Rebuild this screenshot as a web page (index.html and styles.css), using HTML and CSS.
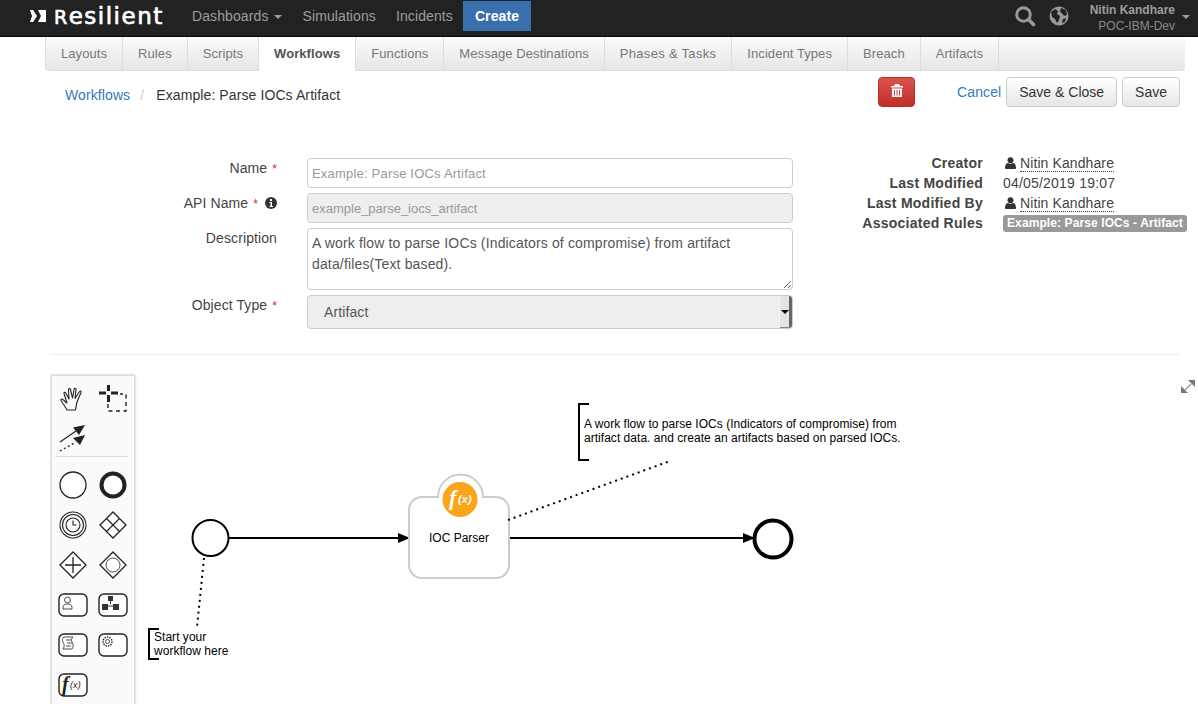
FILE: index.html
```html
<!DOCTYPE html>
<html lang="en">
  <head>
    <meta charset="UTF-8" />
    <title>Workflows</title>
    <link rel="stylesheet" href="styles.css">
  </head>
  <body>
    <header class="navbar">
      <div class="brand">
        <svg class="brandMark" width="16" height="14" viewBox="0 0 16 14"><path d="M0 1h3l4 6-4 6H0l2-6zM8 1h8v12H8l3-6z" fill="#fff"/></svg>
        <span class="brandName"><span class="brandInitial">R</span>esilient</span>
      </div>
      <a class="navLink">Dashboards <span class="caret"></span></a>
      <a class="navLink">Simulations</a>
      <a class="navLink">Incidents</a>
      <a class="navCreate">Create</a>
      <div class="navRight">
        <svg class="navIcon" width="22" height="22" viewBox="0 0 22 22"><circle cx="9.5" cy="9.5" r="6.8" fill="none" stroke="#999" stroke-width="3"/><path d="M14.5 14.5l5 5" stroke="#999" stroke-width="3.6" stroke-linecap="round"/></svg>
        <svg class="navIcon globe" width="20" height="20" viewBox="0 0 20 20"><circle cx="10" cy="10" r="9.5" fill="#999"/><path d="M2 6l4-3 3 2-1 3 3 2-1 4-2 3-2-4-3-2zM12 2l5 2 1 5-3 1-2-3-2-1zM14 13l3-1-1 4-3 1z" fill="#222"/></svg>
        <div class="user">
          <div class="userName">Nitin Kandhare</div>
          <div class="userOrg">POC-IBM-Dev</div>
        </div>
        <span class="caret userCaret"></span>
      </div>
    </header>

    <nav class="tabs">
      <a class="tab">Layouts</a>
      <a class="tab">Rules</a>
      <a class="tab">Scripts</a>
      <a class="tab active">Workflows</a>
      <a class="tab">Functions</a>
      <a class="tab">Message Destinations</a>
      <a class="tab wide">Phases &amp; Tasks</a>
      <a class="tab">Incident Types</a>
      <a class="tab">Breach</a>
      <a class="tab">Artifacts</a>
    </nav>

    <div class="toolbar">
      <div class="crumbs">
        <a class="link">Workflows</a>
        <span class="crumbSep">/</span>
        <span>Example: Parse IOCs Artifact</span>
      </div>
      <div class="actions">
        <button class="btn btnDanger">
          <svg width="12" height="13" viewBox="0 0 12 13"><path d="M4 0h4l1 2h3v1.500H0V2h3zM1 4.500h10V13H1zM3 6v5.500h1V6zM5.500 6v5.500h1V6zM8 6v5.500h1V6z" fill="#fff" fill-rule="evenodd"/></svg>
        </button>
        <a class="link cancel">Cancel</a>
        <button class="btn">Save &amp; Close</button>
        <button class="btn">Save</button>
      </div>
    </div>

    <section class="details">
      <form class="form">
        <label class="fieldLabel">Name <span class="req">*</span></label>
        <input class="field nameField" value="Example: Parse IOCs Artifact" />
        <label class="fieldLabel">API Name <span class="req">*</span>
          <svg class="info" width="12" height="12" viewBox="0 0 12 12"><circle cx="6" cy="6" r="6" fill="#333"/><path d="M5 2h2v2H5zM4.500 5H7v4h1v1H4.500V9h1V6h-1z" fill="#fff"/></svg>
        </label>
        <input class="field disabled" value="example_parse_iocs_artifact" disabled />
        <label class="fieldLabel">Description</label>
        <textarea class="field area">A work flow to parse IOCs (Indicators of compromise) from artifact data/files(Text based).</textarea>
        <label class="fieldLabel">Object Type <span class="req">*</span></label>
        <div class="selectBox">
          <span class="selectValue">Artifact</span>
          <span class="selectArrow"></span>
        </div>
      </form>
      <dl class="meta">
        <dt>Creator</dt>
        <dd>
          <svg class="person" width="11" height="12" viewBox="0 0 11 12"><circle cx="5.500" cy="3.200" r="3" fill="#333"/><path d="M0 11c0-3.500 1.500-5 3-5l2.500 1L8 6c1.500 0 3 1.500 3 5 0 .6-.5 1-1 1H1c-.5 0-1-.4-1-1z" fill="#333"/></svg>
          <span class="dotted">Nitin Kandhare</span>
        </dd>
        <dt>Last Modified</dt>
        <dd class="date">04/05/2019 19:07</dd>
        <dt>Last Modified By</dt>
        <dd>
          <svg class="person" width="11" height="12" viewBox="0 0 11 12"><circle cx="5.500" cy="3.200" r="3" fill="#333"/><path d="M0 11c0-3.500 1.500-5 3-5l2.500 1L8 6c1.500 0 3 1.500 3 5 0 .6-.5 1-1 1H1c-.5 0-1-.4-1-1z" fill="#333"/></svg>
          <span class="dotted">Nitin Kandhare</span>
        </dd>
        <dt>Associated Rules</dt>
        <dd><span class="badge">Example: Parse IOCs - Artifact</span></dd>
      </dl>
    </section>

    <hr class="divider" />

    <section class="canvas">
      <svg class="diagram" width="1198" height="349" viewBox="0 355 1198 349">
        <defs>
          <marker id="arrow" markerWidth="12" markerHeight="10" refX="11" refY="5" orient="auto" markerUnits="userSpaceOnUse"><path d="M0 0L12 5L0 10z" fill="#000"/></marker>
        </defs>
        <path d="M1195 380v7l-7-7zM1181 393v-7l7 7z" fill="#777"/>
        <path d="M1185 390l6-6" stroke="#999" stroke-width="1.400"/>

        <circle cx="210.500" cy="538" r="18" fill="#fff" stroke="#000" stroke-width="2"/>
        <path d="M229 538H409" stroke="#000" stroke-width="2" marker-end="url(#arrow)"/>
        <path d="M509 538H754" stroke="#000" stroke-width="2" marker-end="url(#arrow)"/>
        <circle cx="773" cy="539" r="18.500" fill="#fff" stroke="#000" stroke-width="4"/>

        <path d="M409 510a13 13 0 0 1 13-13h16a22.500 22.500 0 0 1 45 0h13a13 13 0 0 1 13 13v55a13 13 0 0 1-13 13H422a13 13 0 0 1-13-13z" fill="#fff" stroke="#ccc" stroke-width="2"/>
        <circle cx="460" cy="499.500" r="17.500" fill="#faa519"/>
        <text class="fxBig" x="449" y="505">f</text>
        <text class="fxSmall" x="458" y="503">(x)</text>
        <text class="nodeText" x="459" y="542" text-anchor="middle">IOC Parser</text>

        <path d="M204 558L197 627" stroke="#000" stroke-width="2" stroke-dasharray="2 4" fill="none"/>
        <path d="M159 629H149V659H159" stroke="#000" stroke-width="2" fill="none"/>
        <text class="noteText" x="154" y="641">Start your</text>
        <text class="noteText" x="154" y="655">workflow here</text>

        <path d="M508 520L670 461" stroke="#000" stroke-width="2" stroke-dasharray="2 4" fill="none"/>
        <path d="M589 404H579V460H589" stroke="#000" stroke-width="2" fill="none"/>
        <text class="noteText" x="584" y="428">A work flow to parse IOCs (Indicators of compromise) from</text>
        <text class="noteText" x="584" y="442">artifact data. and create an artifacts based on parsed IOCs.</text>
      </svg>

      <div class="palette">
        <div class="tool">
          <svg width="26" height="26" viewBox="0 0 26 26"><path d="M7 24C5 20 3 18 1 14.500c-.6-1 .8-2 1.800-1L7 17 4 7.500c-.3-1.200 1.400-1.700 1.800-.5L9 13 8.500 3.500c0-1.300 1.800-1.300 2 0L12.500 12l1.700-9c.2-1.200 2-1 1.800.3L15 12.500l4.500-7c.6-1 2-.4 1.600.7L17 16c-.5 2-1 5-1.500 8z" fill="none" stroke="#222" stroke-width="1.100" stroke-linejoin="round"/></svg>
        </div>
        <div class="tool">
          <svg width="30" height="28" viewBox="0 0 30 28"><path d="M1 8h7M13 8h7M10.500 0v6M10.500 10v7" stroke="#222" stroke-width="3"/><path d="M10 19v7h18V9h-6" fill="none" stroke="#222" stroke-width="1.400" stroke-dasharray="4 3.500"/></svg>
        </div>
        <div class="tool short">
          <svg width="28" height="28" viewBox="0 0 28 28"><path d="M1 18L17 7" stroke="#222" stroke-width="1.200"/><path d="M14 3.500L26 1 20 11z" fill="#222"/><path d="M1 27l16-9" stroke="#222" stroke-width="1.300" stroke-dasharray="2 2.500"/><path d="M14 14l12-3-5 10z" fill="#222"/></svg>
        </div>
        <div class="tool short"></div>
        <div class="paletteSep"></div>
        <div class="tool"><svg width="28" height="28" viewBox="0 0 28 28"><circle cx="14" cy="14" r="13" fill="#fff" stroke="#222" stroke-width="1.300"/></svg></div>
        <div class="tool"><svg width="28" height="28" viewBox="0 0 28 28"><circle cx="14" cy="14" r="11.500" fill="#fff" stroke="#222" stroke-width="4"/></svg></div>
        <div class="tool"><svg width="28" height="28" viewBox="0 0 28 28"><g fill="none" stroke="#222" stroke-width="1.100"><circle cx="14" cy="14" r="13"/><circle cx="14" cy="14" r="10.500"/><circle cx="14" cy="14" r="7"/><path d="M14 9.500V14h3.500"/></g></svg></div>
        <div class="tool"><svg width="28" height="28" viewBox="0 0 28 28"><path d="M14 1l13 13-13 13L1 14z" fill="#fff" stroke="#222" stroke-width="1.300"/><path d="M7.500 7.500l13 13M20.500 7.500l-13 13" stroke="#222" stroke-width="1.200"/></svg></div>
        <div class="tool"><svg width="28" height="28" viewBox="0 0 28 28"><path d="M14 1l13 13-13 13L1 14z" fill="#fff" stroke="#222" stroke-width="1.300"/><path d="M14 6v16M6 14h16" stroke="#222" stroke-width="1.300"/></svg></div>
        <div class="tool"><svg width="28" height="28" viewBox="0 0 28 28"><path d="M14 1l13 13-13 13L1 14z" fill="#fff" stroke="#222" stroke-width="1.300"/><circle cx="14" cy="14" r="7" fill="none" stroke="#222" stroke-width=".8"/></svg></div>
        <div class="tool"><svg width="30" height="24" viewBox="0 0 30 24"><rect x="1" y="1" width="28" height="22" rx="5" fill="#fff" stroke="#222" stroke-width="1.400"/><circle cx="9.500" cy="7" r="3" fill="none" stroke="#222" stroke-width=".8"/><path d="M5 14c0-2 2-3 4.500-3S14 12 14 14v2H5z" fill="none" stroke="#222" stroke-width=".8"/></svg></div>
        <div class="tool"><svg width="30" height="24" viewBox="0 0 30 24"><rect x="1" y="1" width="28" height="22" rx="5" fill="#fff" stroke="#222" stroke-width="1.400"/><path d="M10 3h5v5h-5zM4 11h6v6H4zM15 11h6v6h-6z" fill="#333"/><path d="M12.500 8v3M10 13h5" stroke="#333"/></svg></div>
        <div class="tool"><svg width="30" height="24" viewBox="0 0 30 24"><rect x="1" y="1" width="28" height="22" rx="5" fill="#fff" stroke="#222" stroke-width="1.400"/><path d="M6 4h9c-2 2-2 3-1 5s2 4 0 7H5c2-3 1-5 0-7s-1-3 1-5zM8 7h5M9 10h5M8 13h5" fill="none" stroke="#222" stroke-width=".8"/></svg></div>
        <div class="tool"><svg width="30" height="24" viewBox="0 0 30 24"><rect x="1" y="1" width="28" height="22" rx="5" fill="#fff" stroke="#222" stroke-width="1.400"/><circle cx="9.500" cy="8.500" r="4.500" fill="none" stroke="#222" stroke-width="1.400" stroke-dasharray="1.500 1"/><circle cx="9.500" cy="8.500" r="2" fill="none" stroke="#222" stroke-width=".8"/></svg></div>
        <div class="tool"><svg width="30" height="24" viewBox="0 0 30 24"><rect x="1" y="1" width="28" height="22" rx="5" fill="#fff" stroke="#222" stroke-width="1.400"/><text class="fxTool" x="4" y="18">f</text><text class="fxToolSmall" x="12" y="15">(x)</text></svg></div>
      </div>
    </section>
  </body>
</html>
```

FILE: styles.css
```css
html,
body {
  margin: 0;
  padding: 0;
  height: 704px;
  overflow: hidden;
  background: #fff;
  color: #333;
  font-family: "Liberation Sans", Arial, sans-serif;
  font-size: 14px;
  letter-spacing: 0.1px;
}

.navbar {
  display: flex;
  align-items: center;
  height: 37px;
  padding-bottom: 4px;
  box-sizing: border-box;
  background: #222;
  border-bottom: 1px solid #080808;
}

.brand {
  display: flex;
  align-items: center;
  width: 192px;
  padding-left: 30px;
  box-sizing: border-box;
}

.brandName {
  margin-left: 8px;
  color: #fff;
  font-family: "DejaVu Sans", sans-serif;
  font-size: 23px;
  letter-spacing: 1.5px;
  line-height: 28px;
  -webkit-text-stroke: 0.7px #fff;
}

.brandInitial {
  font-size: 19px;
}

.navLink {
  margin-right: 20px;
  color: #9d9d9d;
  white-space: nowrap;
}

.caret {
  display: inline-block;
  margin-left: 2px;
  vertical-align: middle;
  border-top: 4px solid #9d9d9d;
  border-left: 4px solid transparent;
  border-right: 4px solid transparent;
}

.navCreate {
  align-self: flex-start;
  margin: 1px 0 0 -10px;
  padding: 0 12px;
  height: 30px;
  line-height: 30px;
  background: #3a6fae;
  color: #fff;
  font-weight: bold;
}

.navRight {
  display: flex;
  align-items: center;
  margin-left: auto;
  padding: 4px 8px 0 0;
}

.navIcon {
  margin: -4px 13px 0 0;
}

.navIcon.globe {
  margin-right: 21px;
}

.user {
  text-align: right;
  font-size: 12px;
  line-height: 16px;
  color: #8a8a8a;
  letter-spacing: 0;
}

.userName {
  font-weight: bold;
  color: #9d9d9d;
}

.userCaret {
  margin: 0 0 2px 7px;
}

.tabs {
  display: flex;
  height: 34px;
  margin: 0 13px 0 45px;
  background: linear-gradient(#fbfbfb, #e6e6e6);
  border-bottom: 1px solid #ddd;
  border-left: 1px solid #ddd;
  border-radius: 0 0 4px 4px;
  box-sizing: border-box;
}

.tab {
  padding: 0 15px;
  border-right: 1px solid #ddd;
  color: #777;
  font-size: 13px;
  letter-spacing: 0.08px;
  line-height: 34px;
  white-space: nowrap;
}

.tab.wide {
  letter-spacing: 0.3px;
}

.tab.active {
  height: 34px;
  background: #fff;
  color: #555;
  font-weight: bold;
}

.toolbar {
  display: flex;
  justify-content: space-between;
  height: 87px;
  padding: 6px 18px 0 65px;
  box-sizing: border-box;
}

.crumbs {
  padding-top: 10px;
}

.crumbSep {
  margin: 0 8px 0 6px;
  color: #ccc;
}

.link {
  color: #337ab7;
}

.actions {
  display: flex;
  align-items: flex-start;
}

.btn {
  height: 30px;
  margin-left: 5px;
  padding: 0 12px;
  background: linear-gradient(#fff, #e6e6e6);
  border: 1px solid #ccc;
  border-radius: 4px;
  color: #333;
  font-family: inherit;
  font-size: 14px;
}

.btnDanger {
  width: 37px;
  margin: 0 42px 0 0;
  padding: 0;
  background: linear-gradient(#d9534f, #c12e2a);
  border-color: #b92c28;
}

.cancel {
  padding-top: 7px;
}

.details {
  display: flex;
  height: 196px;
}

.form {
  display: grid;
  grid-template-columns: 307px 486px;
  grid-template-rows: 30px 30px 62px 34px;
  row-gap: 5px;
  align-content: start;
}

.fieldLabel {
  padding: 2px 30px 0 0;
  text-align: right;
  color: #444;
}

.req {
  color: #c9302c;
  margin-left: 1px;
  font-size: 12px;
}

.info {
  margin-left: 3px;
  vertical-align: -1px;
}

.field {
  margin: 0;
  padding: 4px 4px;
  border: 1px solid #ccc;
  border-radius: 4px;
  box-sizing: border-box;
  background: #fff;
  color: #999;
  font-family: inherit;
  font-size: 13px;
  letter-spacing: 0;
}

.field.nameField {
  letter-spacing: 0.2px;
}

.field.disabled {
  background: #eee;
}

.field.area {
  padding-top: 4px;
  color: #555;
  font-size: 14px;
  line-height: 21px;
  letter-spacing: 0.15px;
}

.selectBox {
  display: flex;
  align-items: center;
  justify-content: space-between;
  background: #eee;
  border: 1px solid #ccc;
  border-radius: 4px;
  color: #555;
}

.selectValue {
  padding-left: 16px;
}

.selectArrow {
  position: relative;
  width: 9px;
  height: 31px;
  background: #e4e4e4;
  border-left: 1px solid #f5f5f5;
  border-right: 3px solid #666;
  border-bottom: 1px solid #888;
  border-radius: 0 3px 3px 0;
}

.selectArrow::after {
  content: "";
  position: absolute;
  top: 14px;
  left: 1px;
  border-top: 4px solid #000;
  border-left: 4px solid transparent;
  border-right: 4px solid transparent;
}

.meta {
  display: grid;
  grid-template-columns: 190px 1fr;
  grid-auto-rows: 20px;
  column-gap: 20px;
  margin: -5px 0 0;
  flex: none;
  line-height: 20px;
}

.meta dt {
  text-align: right;
  font-weight: bold;
  color: #444;
  letter-spacing: 0.25px;
}

.meta dd {
  margin: 0;
  color: #444;
  white-space: nowrap;
}

.meta dd.date {
  letter-spacing: 0.2px;
}

.person {
  margin-left: 2px;
  vertical-align: -1px;
}

.dotted {
  border-bottom: 1px dotted #333;
}

.badge {
  display: inline-block;
  padding: 0 4px;
  background: #999;
  border-radius: 3px;
  color: #fff;
  font-size: 12px;
  font-weight: bold;
  line-height: 17px;
  vertical-align: 1px;
}

.divider {
  height: 0;
  margin: 0 18px 0 50px;
  border: 0;
  border-top: 1px solid #eee;
}

.canvas {
  position: relative;
  height: 349px;
}

.diagram {
  display: block;
}

.diagram text {
  font-family: "Liberation Sans", Arial, sans-serif;
  fill: #000;
}

.diagram .noteText {
  font-size: 12px;
  letter-spacing: 0.03px;
}

.diagram .nodeText {
  font-size: 12px;
  letter-spacing: 0;
}

.diagram .fxBig {
  font-family: "Liberation Serif", serif;
  font-size: 22px;
  font-weight: bold;
  font-style: italic;
  fill: #fff;
}

.diagram .fxSmall {
  font-size: 11px;
  font-weight: bold;
  font-style: italic;
  fill: #fff;
}

.palette {
  position: absolute;
  left: 51px;
  top: 20px;
  display: grid;
  grid-template-columns: 40px 40px;
  align-content: start;
  width: 84px;
  height: 340px;
  padding: 3px 0 0 1px;
  box-sizing: border-box;
  background: #fafafa;
  border: 1px solid #ddd;
  box-shadow: 0 0 2px rgba(0, 0, 0, 0.3);
}

.tool {
  display: flex;
  align-items: center;
  justify-content: center;
  height: 40px;
}

.tool.short {
  height: 37px;
}

.paletteSep {
  grid-column: 1 / 3;
  height: 1px;
  margin: 0 5px 8px 2px;
  background: #ddd;
}

.fxTool {
  font-family: "Liberation Serif", serif;
  font-size: 20px;
  font-weight: bold;
  font-style: italic;
  fill: #222;
}

.fxToolSmall {
  font-family: "Liberation Sans", sans-serif;
  font-size: 9px;
  font-style: italic;
  fill: #222;
}
```
